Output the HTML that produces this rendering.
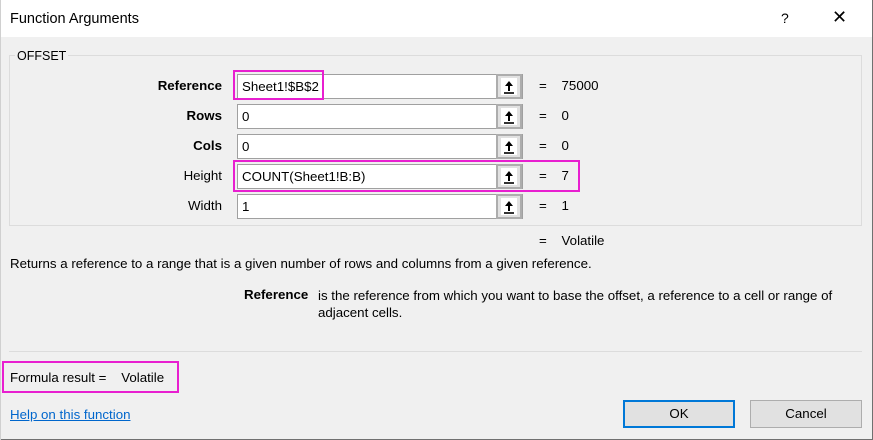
<!DOCTYPE html>
<html><head><style>
*{margin:0;padding:0;box-sizing:border-box}
body{width:873px;height:440px;background:#f0f0f0;font-family:"Liberation Sans",sans-serif;font-size:13.3px;color:#000;position:relative;overflow:hidden}
.a{position:absolute;white-space:nowrap}
.title{left:0;top:0;width:873px;height:37px;background:#fff}
.inp{position:absolute;left:237px;width:286px;height:25px;background:#fff;border:1px solid #a0a0a0}
.inp span{position:absolute;left:4px;top:4px}
.btn{position:absolute;right:0;top:-1px;width:26px;height:25px;border:2px solid #adadad;background:#e1e1e1}
.btn i{position:absolute;left:3px;top:2px;width:16px;height:17px;background:#fff}
.lbl{position:absolute;width:222px;text-align:right;left:0}
.mag{position:absolute;border:2px solid #e81fd0}
</style></head><body>
<div class="a title"></div>
<div class="a" style="left:10px;top:11px;font-size:14.5px">Function Arguments</div>
<div class="a" style="left:781px;top:10px;font-size:14px">?</div>
<div class="a" style="left:832px;top:7px;font-size:18px">✕</div>
<div class="a" style="left:9px;top:55px;width:853px;height:171px;border:1px solid #dcdcdc"></div>
<div class="a" style="left:15px;top:49px;background:#f0f0f0;padding:0 2px;font-size:12.5px">OFFSET</div>
<div class="lbl a" style="top:78px;font-weight:bold">Reference</div>
<div class="lbl a" style="top:108px;font-weight:bold">Rows</div>
<div class="lbl a" style="top:138px;font-weight:bold">Cols</div>
<div class="lbl a" style="top:168px">Height</div>
<div class="lbl a" style="top:198px">Width</div>
<div class="inp" style="top:74px"><span>Sheet1!$B$2</span><div class="btn"><i><svg width="16" height="17"><path d="M8 3L4 8h3v5h2V8h3z" fill="#000"/><path d="M3 15h10" stroke="#000" stroke-width="1.6"/></svg></i></div></div>
<div class="inp" style="top:104px"><span>0</span><div class="btn"><i><svg width="16" height="17"><path d="M8 3L4 8h3v5h2V8h3z" fill="#000"/><path d="M3 15h10" stroke="#000" stroke-width="1.6"/></svg></i></div></div>
<div class="inp" style="top:134px"><span>0</span><div class="btn"><i><svg width="16" height="17"><path d="M8 3L4 8h3v5h2V8h3z" fill="#000"/><path d="M3 15h10" stroke="#000" stroke-width="1.6"/></svg></i></div></div>
<div class="inp" style="top:164px"><span>COUNT(Sheet1!B:B)</span><div class="btn"><i><svg width="16" height="17"><path d="M8 3L4 8h3v5h2V8h3z" fill="#000"/><path d="M3 15h10" stroke="#000" stroke-width="1.6"/></svg></i></div></div>
<div class="inp" style="top:194px"><span>1</span><div class="btn"><i><svg width="16" height="17"><path d="M8 3L4 8h3v5h2V8h3z" fill="#000"/><path d="M3 15h10" stroke="#000" stroke-width="1.6"/></svg></i></div></div>
<div class="a" style="left:539px;top:78px">=&nbsp;&nbsp;&nbsp;&nbsp;75000</div>
<div class="a" style="left:539px;top:108px">=&nbsp;&nbsp;&nbsp;&nbsp;0</div>
<div class="a" style="left:539px;top:138px">=&nbsp;&nbsp;&nbsp;&nbsp;0</div>
<div class="a" style="left:539px;top:168px">=&nbsp;&nbsp;&nbsp;&nbsp;7</div>
<div class="a" style="left:539px;top:198px">=&nbsp;&nbsp;&nbsp;&nbsp;1</div>
<div class="a" style="left:539px;top:233px">=&nbsp;&nbsp;&nbsp;&nbsp;Volatile</div>
<div class="mag" style="left:233px;top:70px;width:91px;height:30px"></div>
<div class="mag" style="left:233px;top:160px;width:347px;height:32px"></div>
<div class="a" style="left:10px;top:256px">Returns a reference to a range that is a given number of rows and columns from a given reference.</div>
<div class="a" style="left:244px;top:287px;font-weight:bold">Reference</div>
<div class="a" style="left:318px;top:287px;line-height:17px">is the reference from which you want to base the offset, a reference to a cell or range of<br>adjacent cells.</div>
<div class="a" style="left:9px;top:351px;width:853px;height:1px;background:#dcdcdc"></div>
<div class="a" style="left:10px;top:370px">Formula result =&nbsp;&nbsp;&nbsp;&nbsp;Volatile</div>
<div class="mag" style="left:2px;top:361px;width:177px;height:32px"></div>
<div class="a" style="left:10px;top:407px;color:#0066cc;text-decoration:underline">Help on this function</div>
<div class="a" style="left:623px;top:400px;width:112px;height:28px;border:2px solid #0078d7;background:#e1e1e1;text-align:center;line-height:24px">OK</div>
<div class="a" style="left:750px;top:400px;width:112px;height:28px;border:1px solid #adadad;background:#e1e1e1;text-align:center;line-height:26px">Cancel</div>
<div class="a" style="left:872px;top:0;width:1px;height:440px;background:#707070"></div>
<div class="a" style="left:0;top:439px;width:873px;height:1px;background:#707070"></div>
<div class="a" style="left:0;top:0;width:1px;height:440px;background:#d0d0d0"></div>
</body></html>
